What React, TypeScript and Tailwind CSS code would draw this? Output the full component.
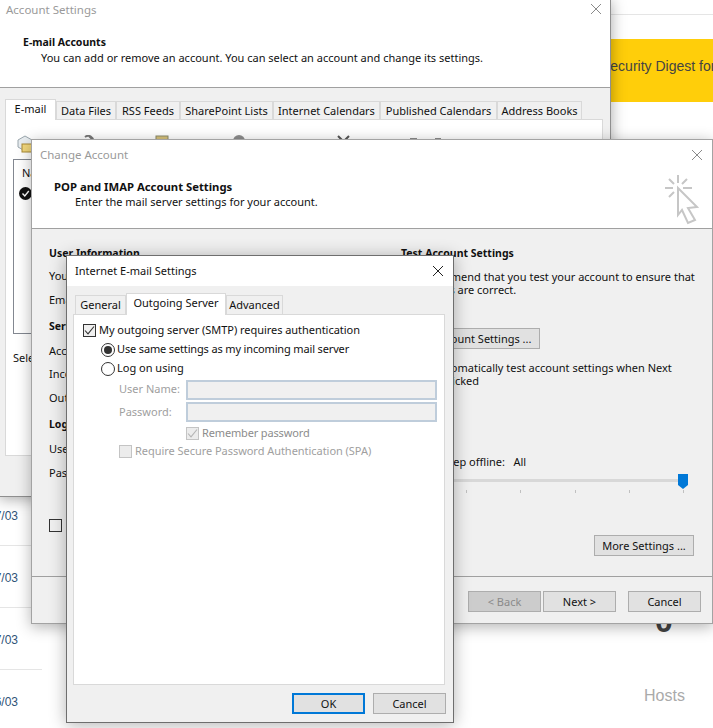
import type { ReactNode } from 'react'

function CloseX({ className = 'stroke-[#8a8a8a]' }: { className?: string }) {
  return (
    <svg width="12" height="12" viewBox="0 0 12 12" className={className}>
      <path d="M1 1 L11 11 M11 1 L1 11" strokeWidth="1" fill="none" />
    </svg>
  )
}

function Check({ color = '#333' }: { color?: string }) {
  return (
    <svg width="11" height="11" viewBox="0 0 11 11">
      <path d="M1 5.5 L4 8.8 L10 1.5" stroke={color} strokeWidth="1.1" fill="none" />
    </svg>
  )
}

function CheckBox({ checked, disabled }: { checked?: boolean; disabled?: boolean }) {
  return (
    <span className={`flex h-[13px] w-[13px] shrink-0 items-center justify-center border ${disabled ? 'border-[#c4c4c4] bg-[#ececec]' : 'border-[#333333] bg-[#f0f0f0]'}`}>
      {checked && <Check color={disabled ? '#b5b5b5' : '#333'} />}
    </span>
  )
}

function Radio({ checked }: { checked?: boolean }) {
  return (
    <span className="flex h-[14px] w-[14px] shrink-0 items-center justify-center rounded-full border border-[#333333]">
      {checked && <span className="h-[8px] w-[8px] rounded-full bg-[#333333]" />}
    </span>
  )
}

function Btn({ children, className = '' }: { children: ReactNode; className?: string }) {
  return (
    <div className={`flex h-[21px] items-center justify-center whitespace-nowrap border border-[#adadad] bg-[#e1e1e1] ${className}`}>
      {children}
    </div>
  )
}

function Tab({ label, width, active, tall }: { label: string; width: string; active?: boolean; tall?: boolean }) {
  const idle = tall ? 'h-[19px] bg-[#f0f0f0] pb-[2px]' : 'h-[18px] bg-[#f0f0f0]'
  const on = tall ? 'z-10 -mb-px -mt-[2px] h-[22px] bg-white pb-[4px]' : 'z-10 -mb-px -mt-[2px] h-[21px] bg-white pb-[3px]'
  return (
    <div className={`flex items-center justify-center whitespace-nowrap border border-b-0 border-[#d9d9d9] ${width} ${active ? on : idle}`}>
      {label}
    </div>
  )
}

const leftRows = [
  { text: 'User Information', h: 'h-[24px]', bold: true },
  { text: 'Your Name:', h: 'h-[23px]' },
  { text: 'Email Address:', h: 'h-[25px]' },
  { text: 'Server Information', h: 'h-[27px]', bold: true },
  { text: 'Account Type:', h: 'h-[22px]' },
  { text: 'Incoming mail server:', h: 'h-[24px]' },
  { text: 'Outgoing mail server (SMTP):', h: 'h-[25px]' },
  { text: 'Logon Information', h: 'h-[27px]', bold: true },
  { text: 'User Name:', h: 'h-[22px]' },
  { text: 'Password:', h: 'h-[26px]' },
]

function Toolbar() {
  return (
    <div className="flex h-[18px] items-start whitespace-nowrap pl-[3px]">
      <div className="flex w-[64px] gap-[2px]">
        <svg width="18" height="18" viewBox="0 0 18 18">
          <path d="M2 5 L9 1 L16 5 L16 12 L9 16 L2 12 Z" fill="#e8edf0" stroke="#9aa6ad" />
          <rect x="6" y="9" width="10" height="8" fill="#f2d77c" stroke="#a98a35" />
        </svg>
        <span className="pt-[2px]">New...</span>
      </div>
      <div className="flex w-[75px] gap-[4px]">
        <svg width="16" height="16" viewBox="0 0 16 16">
          <path d="M3 14 L8 8 M5 2 A5 5 0 0 1 13 7 M9 1 L14 6" stroke="#777777" strokeWidth="2" fill="none" />
        </svg>
        <span className="pt-[2px]">Repair...</span>
      </div>
      <div className="flex w-[78px] gap-[6px]">
        <svg width="14" height="14" viewBox="0 0 14 14">
          <rect x="1" y="1" width="12" height="12" fill="#d8c27a" stroke="#8a8a6a" />
        </svg>
        <span className="pt-[2px]">Change...</span>
      </div>
      <div className="flex w-[104px] gap-[8px]">
        <svg width="12" height="12" viewBox="0 0 12 12">
          <circle cx="6" cy="6" r="6" fill="#8d8d8d" />
        </svg>
        <span className="pt-[2px]">Set as Default</span>
      </div>
      <div className="flex w-[73px] gap-[5px]">
        <svg width="13" height="13" viewBox="0 0 13 13">
          <path d="M1 1 L12 12 M12 1 L1 12" stroke="#555555" strokeWidth="2" fill="none" />
        </svg>
        <span className="pt-[2px]">Remove</span>
      </div>
      <div className="mt-[3px] h-[6px] w-[25px]">
        <div className="h-[6px] w-[7px] bg-[#8d8d8d]" />
      </div>
      <div className="mt-[3px] h-[6px] w-[6px] bg-[#8d8d8d]" />
    </div>
  )
}

function AccountSettings() {
  return (
    <div className="absolute -left-px -top-px flex h-[498px] w-[612px] flex-col border border-[#8f8f8f] bg-white shadow-[0_2px_14px_rgba(0,0,0,0.35)]">
      <div className="flex h-[88px] flex-col border-b border-[#a0a0a0] pl-[6px]">
        <div className="flex h-[20px] items-center justify-between pb-[2px] pr-[8px] text-[11.5px] text-[#9a9a9a]">
          <span>Account Settings</span>
          <CloseX />
        </div>
        <div className="mt-[15px] pl-[17px] text-[10.5px] font-bold">E-mail Accounts</div>
        <div className="pl-[35px]">You can add or remove an account. You can select an account and change its settings.</div>
      </div>
      <div className="flex-1 bg-[#f0f0f0] px-[5px] pt-[13px]">
        <div className="flex">
          <Tab label="E-mail" width="w-[51px]" active />
          <Tab label="Data Files" width="w-[60px]" />
          <Tab label="RSS Feeds" width="w-[64px]" />
          <Tab label="SharePoint Lists" width="w-[93px]" />
          <Tab label="Internet Calendars" width="w-[107px]" />
          <Tab label="Published Calendars" width="w-[117px]" />
          <Tab label="Address Books" width="w-[85px]" />
        </div>
        <div className="h-[337px] w-[598px] border border-[#d9d9d9] bg-white px-[7px] pt-[15px]">
          <Toolbar />
          <div className="mt-[6px] h-[175px] w-[400px] border border-[#828790] pl-[8px] pt-[5px]">
            <div>Name</div>
            <svg width="13" height="13" viewBox="0 0 13 13" className="-ml-[3px] mt-[7px]">
              <circle cx="6.5" cy="6.5" r="6.5" fill="#111111" />
              <path d="M3.5 6.5 L5.8 9 L9.8 4" stroke="#ffffff" strokeWidth="1.4" fill="none" />
            </svg>
          </div>
          <div className="mt-[16px]">Selected account</div>
        </div>
      </div>
    </div>
  )
}

function ChangeAccount() {
  return (
    <div className="absolute left-[31px] top-[139px] flex h-[485px] w-[682px] flex-col border border-[#a3a3a3] bg-[#f0f0f0] shadow-[0_3px_14px_rgba(0,0,0,0.3)]">
      <div className="relative h-[89px] shrink-0 border-b border-[#a0a0a0] bg-white pl-[8px]">
        <div className="flex h-[30px] items-center justify-between pr-[9px] text-[11.5px] text-[#9a9a9a]">
          <span className="-mt-[2px]">Change Account</span>
          <CloseX />
        </div>
        <div className="mt-[9px] pl-[14px] text-[11.3px] font-bold">POP and IMAP Account Settings</div>
        <div className="pl-[35px]">Enter the mail server settings for your account.</div>
        <svg width="40" height="56" viewBox="0 0 40 56" className="absolute left-[628px] top-[30px]" fill="none" stroke="#c6c6c6" strokeWidth="2">
          <path d="M18 5 V13 M5 18 H13 M23 18 H32 M9 9 L14 14 M27 9 L22 14 M9 27 L14 22" />
          <path d="M18 18 L37 37 L28 38 L35 50 L28 53 L22 40 L18 45 Z" />
        </svg>
      </div>
      <div className="flex flex-1">
        <div className="w-[352px] shrink-0 pl-[17px] pt-[11px]">
          {leftRows.map((row) => (
            <div key={row.text} className={`flex items-center ${row.h} ${row.bold ? 'pt-[2px] text-[10.5px] font-bold' : ''}`}>
              {row.text}
            </div>
          ))}
          <div className="mt-[34px]">
            <CheckBox />
          </div>
        </div>
        <div className="w-[310px] pl-[17px] pt-[11px]">
          <div className="flex h-[24px] items-center pt-[2px] text-[10.5px] font-bold">Test Account Settings</div>
          <div className="-ml-[2px] mt-[6px] whitespace-nowrap leading-[13px]">We recommend that you test your account to ensure that<br />the entries are correct.</div>
          <Btn className="mt-[32px] w-[139px]">Test Account Settings ...</Btn>
          <div className="mt-[12px] flex whitespace-nowrap">
            <span className="w-[32px]" />
            <div className="leading-[13px]">Automatically test account settings when Next<br />is clicked</div>
          </div>
          <div className="mt-[67px] pl-[2px]">Mail to keep offline:&nbsp;&nbsp;&nbsp;All</div>
          <div className="relative ml-[35px] mt-[10px] h-[3px] w-[252px] bg-[#d8d8d8]">
            <svg width="10" height="15" viewBox="0 0 10 15" className="absolute right-0 top-[-5px]">
              <path d="M0 0 H10 V11 L5 15 L0 11 Z" fill="#0078d7" />
            </svg>
          </div>
          <div className="ml-[65px] mt-[8px] flex w-[218px] justify-between">
            {[0, 1, 2, 3, 4].map((i) => (
              <span key={i} className="h-[3px] w-px bg-[#c0c0c0]" />
            ))}
          </div>
          <Btn className="ml-[193px] mt-[42px] w-[100px]">More Settings ...</Btn>
        </div>
      </div>
      <div className="flex h-[47px] shrink-0 justify-end border-t border-[#a0a0a0] pr-[11px] pt-[14px]">
        <Btn className="w-[73px] !bg-[#cccccc] text-[#8a8a8a]">&lt; Back</Btn>
        <Btn className="ml-[2px] w-[73px]">Next &gt;</Btn>
        <Btn className="ml-[12px] w-[73px]">Cancel</Btn>
      </div>
    </div>
  )
}

function InternetSettings() {
  return (
    <div className="absolute left-[66px] top-[255px] flex h-[468px] w-[388px] flex-col border border-[#6e6e6e] bg-[#f0f0f0] shadow-[0_2px_16px_rgba(0,0,0,0.3)]">
      <div className="flex h-[30px] shrink-0 items-center justify-between bg-white pl-[8px] pr-[9px]">
        <span className="-mt-[2px]">Internet E-mail Settings</span>
        <CloseX className="stroke-[#222222]" />
      </div>
      <div className="flex-1 pl-[6px] pt-[9px]">
        <div className="flex pl-[2px]">
          <Tab label="General" width="w-[51px]" tall />
          <Tab label="Outgoing Server" width="w-[100px]" active tall />
          <Tab label="Advanced" width="w-[57px]" tall />
        </div>
        <div className="h-[371px] w-[372px] border border-[#d9d9d9] bg-white pl-[9px] pt-[9px]">
          <div className="flex h-[13px] items-center gap-[3px]">
            <CheckBox checked />
            <span className="-mt-[2px] tracking-[-0.04px]">My outgoing server (SMTP) requires authentication</span>
          </div>
          <div className="ml-[18px] mt-[3px] flex h-[19px] items-center gap-[2px]">
            <Radio checked />
            <span className="-mt-[2px] tracking-[-0.15px]">Use same settings as my incoming mail server</span>
          </div>
          <div className="ml-[18px] flex h-[19px] items-center gap-[2px]">
            <Radio />
            <span className="-mt-[2px]">Log on using</span>
          </div>
          <div className="ml-[36px] mt-[2px] flex h-[20px] items-center text-[#a0a0a0]">
            <span className="-mt-[4px] w-[67px]">User Name:</span>
            <div className="h-[20px] w-[251px] border-2 border-[#bfcddb] bg-[#f0f0f0]" />
          </div>
          <div className="ml-[36px] mt-[2px] flex h-[20px] items-center text-[#a0a0a0]">
            <span className="-mt-[2px] w-[67px]">Password:</span>
            <div className="h-[20px] w-[251px] border-2 border-[#bfcddb] bg-[#f0f0f0]" />
          </div>
          <div className="ml-[103px] mt-[5px] flex h-[13px] items-center gap-[3px] text-[#8c8c8c]">
            <CheckBox checked disabled />
            <span className="-mt-[2px] tracking-[-0.15px]">Remember password</span>
          </div>
          <div className="ml-[36px] mt-[5px] flex h-[13px] items-center gap-[3px] text-[#a0a0a0]">
            <CheckBox disabled />
            <span className="-mt-[2px] tracking-[-0.04px]">Require Secure Password Authentication (SPA)</span>
          </div>
        </div>
        <div className="mt-[8px] flex pl-[219px]">
          <Btn className="w-[73px] border-2 !border-[#0078d7]">OK</Btn>
          <Btn className="ml-[8px] w-[73px]">Cancel</Btn>
        </div>
      </div>
    </div>
  )
}

export default function App() {
  return (
    <div className="relative h-[728px] w-[713px] overflow-hidden bg-white font-['Noto_Sans',sans-serif] text-[11px] leading-[15px] text-[#111111]">
      {/* Страница за окнами */}
      <div className="absolute left-[611px] top-[14px] h-px w-[102px] bg-[#e5e5e5]" />
      <div className="absolute left-[590px] top-[39px] flex h-[63px] w-[123px] items-center overflow-hidden whitespace-nowrap bg-[#ffce0a] pb-[8px] pl-[11px] font-['Liberation_Sans',sans-serif] text-[14px] text-[#444444]">
        Security Digest for
      </div>
      <div className="absolute left-0 top-[484px] flex w-[42px] flex-col overflow-hidden font-['Liberation_Sans',sans-serif] text-[12px] text-[#2f5378]">
        {['17/03', '17/03', '17/03', '16/03'].map((date, i) => (
          <div key={i} className={`flex h-[62px] w-[42px] items-center pt-[3px] ${i < 3 ? 'border-b border-[#e5e5e5]' : ''}`}>
            <span className="-ml-[12px]">{date}</span>
          </div>
        ))}
      </div>
      <div className="absolute left-[655px] top-[603px] font-['Liberation_Sans',sans-serif] text-[32px] font-bold leading-[36px] text-[#444444]">0</div>
      <div className="absolute left-[644px] top-[687px] font-['Liberation_Sans',sans-serif] text-[16px] leading-[18px] text-[#aaaaaa]">Hosts</div>

      <AccountSettings />
      <ChangeAccount />
      <InternetSettings />
    </div>
  )
}
